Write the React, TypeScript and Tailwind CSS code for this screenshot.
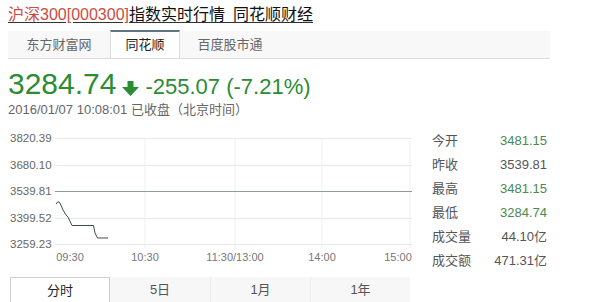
import React from 'react';

const font = "font-['Liberation_Sans','Noto_Sans_CJK_SC',sans-serif]";

const stats = [
  { label: '今开', value: '3481.15', green: true },
  { label: '昨收', value: '3539.81', green: false },
  { label: '最高', value: '3481.15', green: true },
  { label: '最低', value: '3284.74', green: true },
  { label: '成交量', value: '44.10亿', green: false },
  { label: '成交额', value: '471.31亿', green: false },
];

const yLabels = [
  { text: '3820.39', y: 10 },
  { text: '3680.10', y: 37 },
  { text: '3539.81', y: 63 },
  { text: '3399.52', y: 90 },
  { text: '3259.23', y: 116 },
];

const xLabels = [
  { text: '09:30', x: 70 },
  { text: '10:30', x: 145 },
  { text: '11:30/13:00', x: 235 },
  { text: '14:00', x: 322 },
  { text: '15:00', x: 398 },
];

function Chart() {
  return (
    <svg width="415" height="148" className="shrink-0">
      {/* vertical grid */}
      {[145, 235, 322, 410].map((x) => (
        <line key={x} x1={x} y1={10} x2={x} y2={120} stroke="#f0f0f0" strokeWidth="1" />
      ))}
      {yLabels.map((l) => (
        <g key={l.text}>
          <line
            x1={55}
            y1={l.y + 0.5}
            x2={412}
            y2={l.y + 0.5}
            stroke={l.text === '3539.81' ? '#8c9e94' : '#e9e9e9'}
            strokeWidth="1"
          />
          <text x={10} y={l.y + 4} fontSize="11.5" fill="#666" fontFamily="Liberation Sans, sans-serif">
            {l.text}
          </text>
        </g>
      ))}
      {xLabels.map((l) => (
        <text
          key={l.text}
          x={l.x}
          y={133}
          fontSize="11"
          fill="#777"
          textAnchor="middle"
          fontFamily="Liberation Sans, sans-serif"
        >
          {l.text}
        </text>
      ))}
      <polyline
        points="56,76 58,73.5 60,75 63,82 66,87 68,89 72,97.5 93.5,97.5 95,105 97.5,110 108,110"
        fill="none"
        stroke="#3d4b58"
        strokeWidth="1"
      />
    </svg>
  );
}

export default function App() {
  return (
    <div className={`w-[593px] h-[302px] bg-white overflow-hidden text-[#333] ${font}`}>
      {/* title */}
      <div className="h-[31px] pl-2 pt-[3px]">
        <span className="text-[16px] leading-[19px] underline underline-offset-2 whitespace-pre">
          <span className="text-[#cf4b3f]">沪深300[000300]</span>
          <span className="text-[#111]">{'指数实时行情\u2002同花顺财经'}</span>
        </span>
      </div>

      {/* source tabs */}
      <div className="ml-2 w-[542px] h-[28px] bg-[#f8f8f8] border-b border-[#dcdcdc] flex text-[13px] text-[#666]">
        <div className="w-[102px] flex items-center justify-center pt-[1px]">东方财富网</div>
        <div className="w-[70px] h-[28px] -mt-[1px] bg-white border-t-2 border-t-[#5d7585] border-x border-x-[#dcdcdc] flex items-center justify-center text-[#222]">
          同花顺
        </div>
        <div className="w-[100px] flex items-center justify-center pt-[1px]">百度股市通</div>
      </div>

      {/* price */}
      <div className="mt-[8px] h-[34px] pl-2 flex items-baseline text-[#2b8d33]">
        <span className="text-[30px] leading-[34px]">3284.74</span>
        <svg width="17" height="15" viewBox="0 0 17 15" className="ml-[6px] self-end mb-[5px]">
          <rect x="5.5" y="0" width="6" height="7" fill="#2b8d33" />
          <polygon points="0,6 17,6 8.5,15" fill="#2b8d33" />
        </svg>
        <span className="ml-[6px] text-[22px] leading-[34px]">-255.07 (-7.21%)</span>
      </div>

      {/* time */}
      <div className="mt-[1px] pl-2 h-[16px] text-[13px] leading-[16px] text-[#666]">
        2016/01/07 10:08:01 已收盘（北京时间）
      </div>

      {/* chart + stats */}
      <div className="mt-[10px] h-[148px] flex">
        <Chart />
        <div className="ml-[17px] w-[115px] pt-[1px] text-[13px]">
          {stats.map((s) => (
            <div key={s.label} className="h-[24px] flex items-center justify-between">
              <span className="text-[#555]">{s.label}</span>
              <span className={s.green ? 'text-[#4a8a4f]' : 'text-[#555]'}>{s.value}</span>
            </div>
          ))}
        </div>
      </div>

      {/* period tabs */}
      <div className="mt-[1px] ml-[10px] w-[400px] h-[26px] bg-[#f7f7f7] flex text-[13px] text-[#555]">
        <div className="w-[100px] bg-white border border-[#cfcfcf] border-b-0 flex items-center justify-center text-[#222]">
          分时
        </div>
        <div className="w-[100px] flex items-center justify-center">5日</div>
        <div className="w-[100px] flex items-center justify-center border-l border-[#eeeeee]">1月</div>
        <div className="w-[100px] flex items-center justify-center border-l border-[#eeeeee]">1年</div>
      </div>
    </div>
  );
}
